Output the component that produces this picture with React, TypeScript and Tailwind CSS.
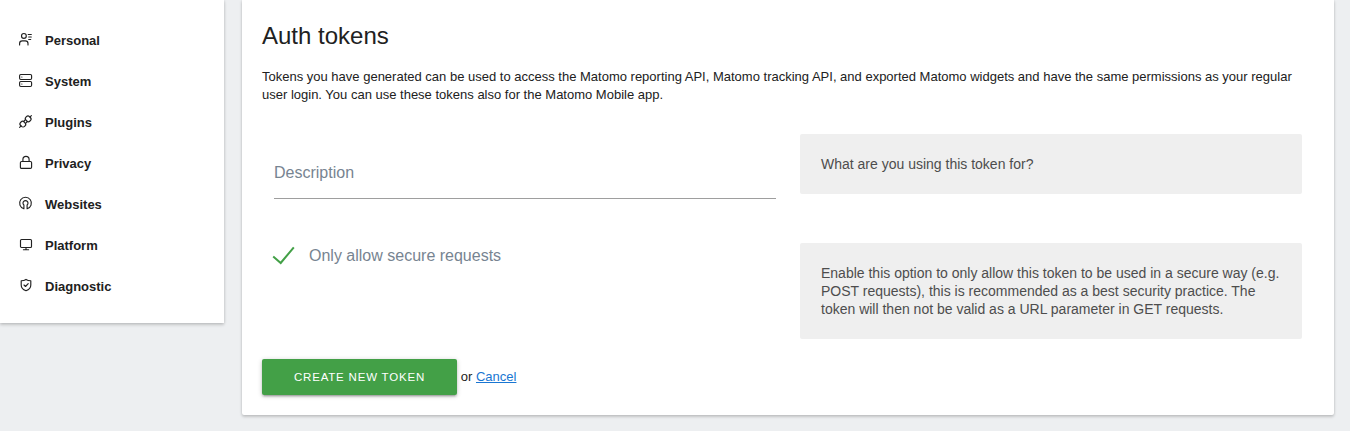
import type { ReactNode } from 'react';

const menu: { label: string; icon: ReactNode }[] = [
  {
    label: 'Personal',
    icon: (
      <>
        <circle cx="4.900" cy="3.900" r="2.400" />
        <path d="M.6 12.900v-1.400c0-1.600 1.100-2.700 2.700-2.700h3c1.600 0 2.700 1.100 2.700 2.700v1.400M9.200 2.500h3.100M9.700 5h2.600M9.700 7.500h2" />
      </>
    ),
  },
  {
    label: 'System',
    icon: (
      <>
        <rect x="0.600" y="1.500" width="12" height="5" rx="1.200" />
        <rect x="0.600" y="8.500" width="12" height="5" rx="1.200" />
        <path d="M2.800 4h.1M2.800 11h.1" />
      </>
    ),
  },
  {
    label: 'Plugins',
    icon: (
      <g transform="rotate(-45 6.500 7.500)">
        <rect x="0.200" y="4.700" width="5" height="5.600" rx="2.200" />
        <rect x="7.800" y="4.700" width="5" height="5.600" rx="2.200" />
        <path d="M-1.800 7.500H.2M12.800 7.500h2M5.200 6.200h2.600M5.200 8.800h2.600" />
      </g>
    ),
  },
  {
    label: 'Privacy',
    icon: (
      <>
        <rect x="1.400" y="6.500" width="11.200" height="6.900" rx="1.200" />
        <path d="M3.900 6.500V4.500a3.100 3.100 0 0 1 6.200 0v2" />
      </>
    ),
  },
  {
    label: 'Websites',
    icon: (
      <path d="M4.900 12.800a5.900 5.900 0 1 1 3.200 0V9a2.500 2.500 0 1 0-3.200 0z" />
    ),
  },
  {
    label: 'Platform',
    icon: (
      <>
        <rect x="1.500" y="2.500" width="11" height="8" rx="1" />
        <path d="M7 10.500v2M4.400 12.700h5.200" />
      </>
    ),
  },
  {
    label: 'Diagnostic',
    icon: (
      <>
        <path d="M7 1.400c1.500 1 3.200 1.300 4.800 1.300v4.200c0 2.800-2.100 4.800-4.800 5.800-2.700-1-4.800-3-4.800-5.800V2.700C3.800 2.700 5.500 2.400 7 1.400z" />
        <path d="M5 7l1.500 1.500 2.700-2.900" />
      </>
    ),
  },
];

const panelShadow = 'shadow-[0_2px_3px_0_rgba(0,0,0,0.16),0_0_3px_0_rgba(0,0,0,0.12)]';

function Sidebar() {
  return (
    <nav className={`h-[323px] w-56 shrink-0 bg-white pt-5 ${panelShadow}`}>
      <ul>
        {menu.map(({ label, icon }) => (
          <li key={label}>
            <a href="#" className="flex h-[41px] items-center pl-[19px] text-[13px] font-bold text-[#212121]">
              <svg
                viewBox="0 0 14 14"
                className="mr-3 mb-[3px] size-3.5 overflow-visible fill-none stroke-[#212121] stroke-[1.15]"
                strokeLinecap="round"
                strokeLinejoin="round"
              >
                {icon}
              </svg>
              {label}
            </a>
          </li>
        ))}
      </ul>
    </nav>
  );
}

function Help({ children }: { children: ReactNode }) {
  return (
    <div className="w-[502px] rounded-[2px] bg-[#efefef] p-[21px] text-sm leading-[18px] text-[#4d4d4d]">
      {children}
    </div>
  );
}

export default function App() {
  return (
    <div
      className="flex h-[431px] items-start gap-[18px] overflow-hidden bg-[#edeff1] text-[13px] leading-[18px] text-[#212121]"
      style={{ fontFamily: '"Liberation Sans", Arial, sans-serif' }}
    >
      <Sidebar />
      <main className={`h-[415px] w-[1092px] rounded-b-[2px] bg-white px-5 pt-5 ${panelShadow}`}>
        <h2 className="text-2xl leading-8 font-normal">Auth tokens</h2>
        <p className="mt-4">
          Tokens you have generated can be used to access the Matomo reporting API, Matomo tracking API, and exported
          Matomo widgets and have the same permissions as your regular user login. You can use these tokens also for
          the Matomo Mobile app.
        </p>
        <form>
          <div className="mt-[30px] flex h-[109px] items-start gap-6 pl-3">
            <input
              type="text"
              placeholder="Description"
              aria-label="Description"
              className="h-[65px] w-[502px] border-b border-[#9e9e9e] pt-3.5 text-base outline-none placeholder:text-[#778491] placeholder:opacity-100"
            />
            <Help>What are you using this token for?</Help>
          </div>
          <div className="flex h-[116px] items-start gap-6 pl-3">
            <label className="flex h-[25px] w-[502px] items-center text-base text-[#778491]">
              <svg viewBox="0 0 24 20" className="mr-[13px] -ml-0.5 h-5 w-6 fill-none stroke-[#43a047] stroke-2">
                <path d="M1.200 10.500L8.700 17L21.800 1.300" />
              </svg>
              Only allow secure requests
            </label>
            <Help>
              Enable this option to only allow this token to be used in a secure way (e.g. POST requests), this is
              recommended as a best security practice. The token will then not be valid as a URL parameter in GET
              requests.
            </Help>
          </div>
          <div className="flex items-center">
            <button
              type="button"
              className="mr-[3.800px] h-9 w-[195px] rounded-[2px] bg-[#43a047] text-[11.500px] tracking-[0.800px] text-white uppercase shadow-[0_2px_2px_0_rgba(0,0,0,0.14),0_3px_1px_-2px_rgba(0,0,0,0.12),0_1px_5px_0_rgba(0,0,0,0.2)]"
            >
              Create new token
            </button>
            <span>
              or{' '}
              <a href="#" className="text-[#1976d2] underline">
                Cancel
              </a>
            </span>
          </div>
        </form>
      </main>
    </div>
  );
}
